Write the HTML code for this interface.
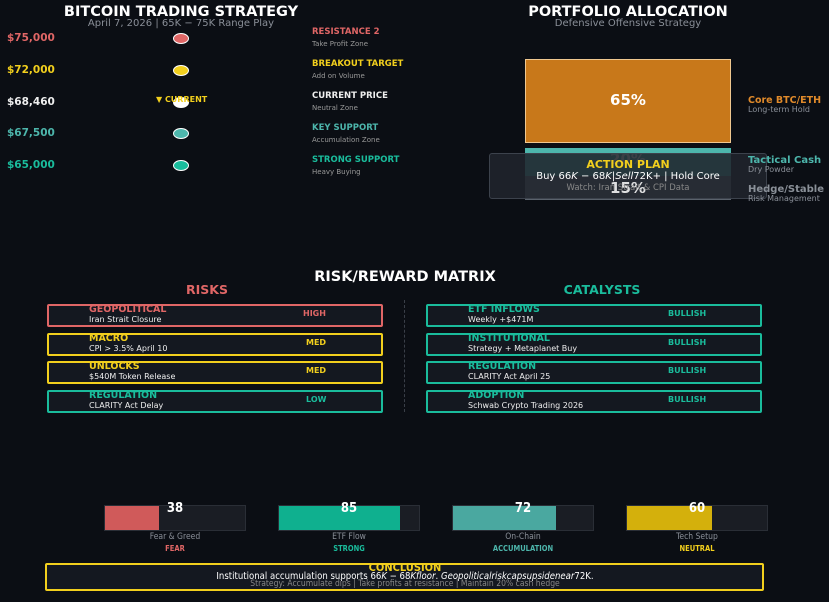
<!DOCTYPE html>
<html><head><meta charset="utf-8"><style>
*{margin:0;padding:0;box-sizing:border-box}
body{width:829px;height:602px;background:#0b0e14;font-family:"DejaVu Sans","Liberation Sans",sans-serif;position:relative;overflow:hidden;color:#fff}
.a{position:absolute;white-space:nowrap}
.c{transform:translateX(-50%)}
.b{font-weight:bold}
.dot{position:absolute;width:16px;height:11px;border-radius:50%;border:1.5px solid #fff;left:173px}
.box{position:absolute;height:23px;border:2px solid;background:#141820;border-radius:2px}
.box .t{position:absolute;left:40px;top:-2px;font-size:9.5px;font-weight:bold}
.box .s{position:absolute;left:40px;top:9px;font-size:8px;color:#eee}
.box .l{position:absolute;top:3px;font-size:8px;font-weight:bold}
.bar{position:absolute;top:505px;width:142px;height:26px;background:#1a1d24;border:1px solid #2a2e36}
.bar i{position:absolute;left:0;top:0;bottom:0}
.cond{font-family:"DejaVu Sans Condensed","DejaVu Sans",sans-serif}
</style></head><body>
<div class="a c b" style="left:181px;top:4px;font-size:14.5px">BITCOIN TRADING STRATEGY</div>
<div class="a c" style="left:181px;top:18px;font-size:10px;color:#8a8f98">April 7, 2026 | 65K − 75K Range Play</div>

<div class="a b" style="left:7px;top:32px;font-size:10.5px;color:#e06666">$75,000</div>
<div class="a b" style="left:7px;top:64px;font-size:10.5px;color:#f2cf1d">$72,000</div>
<div class="a b" style="left:7px;top:96px;font-size:10.5px;color:#eee">$68,460</div>
<div class="a b" style="left:7px;top:127px;font-size:10.5px;color:#4db6ac">$67,500</div>
<div class="a b" style="left:7px;top:159px;font-size:10.5px;color:#1abc9c">$65,000</div>
<div class="dot" style="top:33px;background:#e06666"></div>
<div class="dot" style="top:65px;background:#f2cf1d"></div>
<div class="dot" style="top:97px;background:#fff"></div>
<div class="dot" style="top:128px;background:#4db6ac"></div>
<div class="dot" style="top:160px;background:#1abc9c"></div>
<div class="a b" style="left:156px;top:95px;font-size:8px;color:#f2cf1d">▼ CURRENT</div>

<div class="a b" style="left:312px;top:27px;font-size:8.5px;color:#e06666">RESISTANCE 2</div>
<div class="a" style="left:312px;top:40px;font-size:7px;color:#999">Take Profit Zone</div>
<div class="a b" style="left:312px;top:59px;font-size:8.5px;color:#f2cf1d">BREAKOUT TARGET</div>
<div class="a" style="left:312px;top:72px;font-size:7px;color:#999">Add on Volume</div>
<div class="a b" style="left:312px;top:91px;font-size:8.5px;color:#eee">CURRENT PRICE</div>
<div class="a" style="left:312px;top:104px;font-size:7px;color:#999">Neutral Zone</div>
<div class="a b" style="left:312px;top:123px;font-size:8.5px;color:#4db6ac">KEY SUPPORT</div>
<div class="a" style="left:312px;top:136px;font-size:7px;color:#999">Accumulation Zone</div>
<div class="a b" style="left:312px;top:155px;font-size:8.5px;color:#1abc9c">STRONG SUPPORT</div>
<div class="a" style="left:312px;top:168px;font-size:7px;color:#999">Heavy Buying</div>

<div class="a c b" style="left:628px;top:4px;font-size:14.5px">PORTFOLIO ALLOCATION</div>
<div class="a c" style="left:628px;top:18px;font-size:10px;color:#8a8f98">Defensive Offensive Strategy</div>
<div class="a" style="left:525px;top:59px;width:206px;height:84px;background:#c8781a;border:1px solid #f0c890"></div>
<div class="a c b" style="left:628px;top:91px;font-size:15px;color:#fff">65%</div>
<div class="a" style="left:525px;top:148px;width:206px;height:28px;background:#4db6ac"></div>
<div class="a" style="left:525px;top:176px;width:206px;height:24px;background:#5a626c"></div>
<div class="a c b" style="left:628px;top:150px;font-size:15px;color:#fff">20%</div>
<div class="a" style="left:489px;top:153px;width:278px;height:46px;background:rgba(32,36,44,0.88);border:1px solid #3c424c;border-radius:3px"></div>
<div class="a c b" style="left:628px;top:179px;font-size:15px;color:#fff;opacity:.85">15%</div>
<div class="a c b" style="left:628px;top:158px;font-size:11px;color:#f2cf1d">ACTION PLAN</div>
<div class="a c" style="left:628px;top:171px;font-size:10px;color:#fff">Buy 66<i>K</i> − 68<i>K</i>|<i>Sell</i>72K+ | Hold Core</div>
<div class="a c" style="left:628px;top:183px;font-size:8.5px;color:#888">Watch: Iran Strait &amp; CPI Data</div>
<div class="a b" style="left:748px;top:95px;font-size:9.5px;color:#e08a2a">Core BTC/ETH</div>
<div class="a" style="left:748px;top:105px;font-size:8px;color:#8a8f98">Long-term Hold</div>
<div class="a b" style="left:748px;top:155px;font-size:10px;color:#4db6ac">Tactical Cash</div>
<div class="a" style="left:748px;top:165px;font-size:8px;color:#8a8f98">Dry Powder</div>
<div class="a b" style="left:748px;top:184px;font-size:10px;color:#8a9098">Hedge/Stable</div>
<div class="a" style="left:748px;top:194px;font-size:8px;color:#8a8f98">Risk Management</div>

<div class="a c b" style="left:405px;top:269px;font-size:14.5px">RISK/REWARD MATRIX</div>
<div class="a c b" style="left:207px;top:282px;font-size:12.5px;color:#e06666">RISKS</div>
<div class="a c b" style="left:602px;top:282px;font-size:12.5px;color:#1abc9c">CATALYSTS</div>
<div class="a" style="left:404px;top:300px;height:112px;border-left:1px dashed #3a3f48"></div>

<div class="box" style="left:47px;top:304px;width:336px;border-color:#e06666"><span class="t" style="color:#e06666">GEOPOLITICAL</span><span class="s">Iran Strait Closure</span><span class="l" style="left:254px;color:#e06666">HIGH</span></div>
<div class="box" style="left:47px;top:333px;width:336px;border-color:#f2cf1d"><span class="t" style="color:#f2cf1d">MACRO</span><span class="s">CPI &gt; 3.5% April 10</span><span class="l" style="left:257px;color:#f2cf1d">MED</span></div>
<div class="box" style="left:47px;top:361px;width:336px;border-color:#f2cf1d"><span class="t" style="color:#f2cf1d">UNLOCKS</span><span class="s">$540M Token Release</span><span class="l" style="left:257px;color:#f2cf1d">MED</span></div>
<div class="box" style="left:47px;top:390px;width:336px;border-color:#1abc9c"><span class="t" style="color:#1abc9c">REGULATION</span><span class="s">CLARITY Act Delay</span><span class="l" style="left:257px;color:#1abc9c">LOW</span></div>

<div class="box" style="left:426px;top:304px;width:336px;border-color:#1abc9c"><span class="t" style="color:#1abc9c">ETF INFLOWS</span><span class="s">Weekly +$471M</span><span class="l" style="left:240px;color:#1abc9c">BULLISH</span></div>
<div class="box" style="left:426px;top:333px;width:336px;border-color:#1abc9c"><span class="t" style="color:#1abc9c">INSTITUTIONAL</span><span class="s">Strategy + Metaplanet Buy</span><span class="l" style="left:240px;color:#1abc9c">BULLISH</span></div>
<div class="box" style="left:426px;top:361px;width:336px;border-color:#1abc9c"><span class="t" style="color:#1abc9c">REGULATION</span><span class="s">CLARITY Act April 25</span><span class="l" style="left:240px;color:#1abc9c">BULLISH</span></div>
<div class="box" style="left:426px;top:390px;width:336px;border-color:#1abc9c"><span class="t" style="color:#1abc9c">ADOPTION</span><span class="s">Schwab Crypto Trading 2026</span><span class="l" style="left:240px;color:#1abc9c">BULLISH</span></div>

<div class="bar" style="left:104px"><i style="width:54px;background:#d05a5a"></i></div>
<div class="bar" style="left:278px"><i style="width:121px;background:#0fb08f"></i></div>
<div class="bar" style="left:452px"><i style="width:103px;background:#4aa8a0"></i></div>
<div class="bar" style="left:626px"><i style="width:85px;background:#d4b00c"></i></div>
<div class="a c b cond" style="left:175px;top:501px;font-size:13px">38</div>
<div class="a c b cond" style="left:349px;top:501px;font-size:13px">85</div>
<div class="a c b cond" style="left:523px;top:501px;font-size:13px">72</div>
<div class="a c b cond" style="left:697px;top:501px;font-size:13px">60</div>
<div class="a c cond" style="left:175px;top:532px;font-size:8.5px;color:#8a8f98">Fear &amp; Greed</div>
<div class="a c cond" style="left:349px;top:532px;font-size:8.5px;color:#8a8f98">ETF Flow</div>
<div class="a c cond" style="left:523px;top:532px;font-size:8.5px;color:#8a8f98">On-Chain</div>
<div class="a c cond" style="left:697px;top:532px;font-size:8.5px;color:#8a8f98">Tech Setup</div>
<div class="a c b cond" style="left:175px;top:544px;font-size:7.5px;color:#e06666">FEAR</div>
<div class="a c b cond" style="left:349px;top:544px;font-size:7.5px;color:#1abc9c">STRONG</div>
<div class="a c b cond" style="left:523px;top:544px;font-size:7.5px;color:#4db6ac">ACCUMULATION</div>
<div class="a c b cond" style="left:697px;top:544px;font-size:7.5px;color:#f2cf1d">NEUTRAL</div>

<div class="a" style="left:45px;top:563px;width:719px;height:28px;border:2px solid #f2cf1d;background:#141820;border-radius:2px"></div>
<div class="a c b cond" style="left:405px;top:561px;font-size:11px;color:#f2cf1d">CONCLUSION</div>
<div class="a c cond" style="left:405px;top:571px;font-size:9.5px;color:#fff">Institutional accumulation supports 66<i>K</i> − 68<i>Kfloor</i>. <i>Geopoliticalriskcapsupsidenear</i>72K.</div>
<div class="a c cond" style="left:405px;top:579px;font-size:8.5px;color:#888">Strategy: Accumulate dips | Take profits at resistance | Maintain 20% cash hedge</div>
</body></html>
